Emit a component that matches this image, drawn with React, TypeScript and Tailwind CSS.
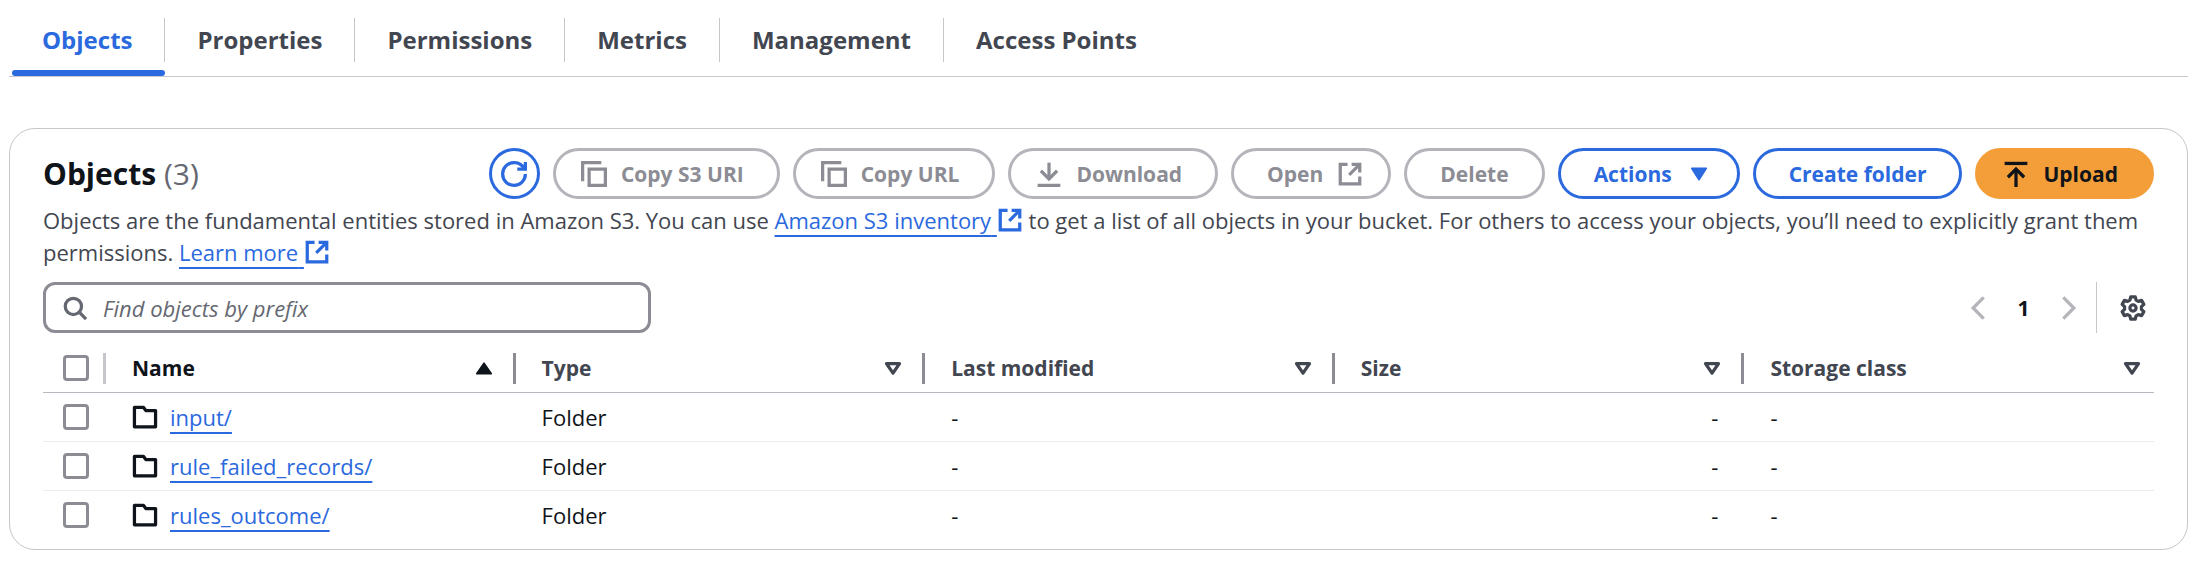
import type { ReactNode } from "react";

type IconProps = { children: ReactNode; className?: string };

function Icon({ children, className = "" }: IconProps) {
  return (
    <svg
      viewBox="0 0 16 16"
      className={`h-[26px] w-[26px] shrink-0 fill-none stroke-current stroke-2 ${className}`}
      aria-hidden="true"
    >
      {children}
    </svg>
  );
}

const RefreshIcon = () => (
  <Icon>
    <path d="M10 5h5V0.6" />
    <path d="M15 8a7 7 0 1 1-7-7 7.1 7.1 0 0 1 6.5 4" />
  </Icon>
);

const CopyIcon = () => (
  <Icon>
    <path d="M15 5H5v10h10V5z" />
    <path d="M12.5 1H1v11.5" />
  </Icon>
);

const DownloadIcon = () => (
  <Icon>
    <path d="M1 15h14" />
    <path d="m13 6-5 5-5-5" />
    <path d="M8 11V1" />
  </Icon>
);

const UploadIcon = () => (
  <Icon>
    <path d="M1 1.5h14" />
    <path d="m3 10 5-5 5 5" />
    <path d="M8 5v11" />
  </Icon>
);

const ExternalIcon = ({ className = "" }: { className?: string }) => (
  <Icon className={className}>
    <path d="M9 2h5v5" />
    <path d="m7.5 8.5 6-6" />
    <path d="M14 9.5V14H2V2h4.5" />
  </Icon>
);

const SearchIcon = () => (
  <Icon className="text-[#656871]">
    <circle cx="7" cy="7" r="5" />
    <path d="m10.6 10.6 4.2 4.2" />
  </Icon>
);

const FolderIcon = () => (
  <Icon className="text-[#0f141a]">
    <path strokeLinejoin="round" d="M1.5 14V2H7l1.5 2h6v10z" />
  </Icon>
);

const SettingsIcon = () => (
  <Icon>
    <path
      strokeLinejoin="round"
      strokeWidth="2"
      d="M6.1 3.1 6.6 1.1h2.8l.5 2 1.39.8 1.99-.56 1.4 2.42-1.49 1.43v1.62l1.49 1.43-1.4 2.42-1.99-.56-1.39.8-.5 2H6.6l-.5-2-1.39-.8-1.99.56-1.4-2.42 1.49-1.43V7.19L1.32 5.76l1.4-2.42 1.99.56z"
    />
    <circle cx="8" cy="8" r="1.9" strokeWidth="2" />
  </Icon>
);

const TriangleDown = () => (
  <Icon>
    <path className="fill-current" strokeLinejoin="round" strokeWidth="1" d="M3.5 4.5h9l-4.5 7z" />
  </Icon>
);

const SortIcon = ({ active }: { active?: boolean }) => (
  <Icon>
    {active ? (
      <path className="fill-current" strokeLinejoin="round" strokeWidth="1" d="M3.5 11.5h9L8 5z" />
    ) : (
      <path strokeLinejoin="round" strokeWidth="2" d="M4 5.3h8l-4 5.9z" />
    )}
  </Icon>
);

const tabs = ["Objects", "Properties", "Permissions", "Metrics", "Management", "Access Points"];

const buttonStyles = {
  normal: "border-[#2b69de] bg-white text-[#2b69de]",
  disabled: "border-[#b4b4bb] bg-white text-[#8c8c94]",
  primary: "border-[#f39e38] bg-[#f39e38] text-[#0f141a]",
};

type ButtonProps = {
  variant?: keyof typeof buttonStyles;
  start?: ReactNode;
  end?: ReactNode;
  children: ReactNode;
};

function Button({ variant = "normal", start, end, children }: ButtonProps) {
  return (
    <button
      type="button"
      disabled={variant === "disabled"}
      className={`flex h-[51px] items-center gap-[14px] rounded-full border-3 text-[21px] font-bold whitespace-nowrap ${
        start ? "pl-[25px]" : "pl-[33px]"
      } ${end ? "pr-[25px]" : "pr-[33px]"} ${buttonStyles[variant]}`}
    >
      {start}
      {children}
      {end}
    </button>
  );
}

function ExternalLink({ children }: { children: ReactNode }) {
  return (
    <a href="#" className="text-[#2b69de] underline decoration-2 underline-offset-[6px] [text-decoration-skip-ink:none]">
      {children}{" "}
      <ExternalIcon className="inline-block align-[-4px]" />
    </a>
  );
}

const columns = [
  { label: "Name", active: true },
  { label: "Type" },
  { label: "Last modified" },
  { label: "Size" },
  { label: "Storage class" },
];

const rows = ["input/", "rule_failed_records/", "rules_outcome/"];

function Checkbox({ label }: { label: string }) {
  return (
    <input
      type="checkbox"
      aria-label={label}
      className="ml-5 block h-[26px] w-[26px] shrink-0 appearance-none rounded-[4px] border-3 border-[#8c8c94] bg-white"
    />
  );
}

export default function App() {
  return (
    <main className="bg-white pr-6 pl-[9px] font-['Open_Sans',sans-serif] text-[22px] leading-8 text-[#424650]">
      <nav className="flex border-b border-[#c6c6cd] pl-[3px]">
        {tabs.map((tab, i) => (
          <a
            key={tab}
            href="#"
            aria-current={i === 0 ? "page" : undefined}
            className={`flex flex-col pt-[18px] text-2xl font-bold ${i === 0 ? "text-[#2b69de]" : ""}`}
          >
            <span
              className={`flex h-11 items-center pr-8 ${i === 0 ? "pl-[30px]" : "pl-8"} ${
                i < tabs.length - 1 ? "border-r border-[#c6c6cd]" : ""
              }`}
            >
              {tab}
            </span>
            <span className={`mt-2 h-[6px] rounded-full ${i === 0 ? "bg-[#2b69de]" : ""}`} />
          </a>
        ))}
      </nav>

      <section className="mt-[51px] rounded-[26px] border border-[#c6c6cd] px-[33px] pt-[19px] pb-[10px]">
        <div className="flex items-center justify-between">
          <h2 className="text-[30px] font-bold text-[#0f141a]">
            Objects <span className="font-normal text-[#656871]">(3)</span>
          </h2>
          <div className="flex gap-[13px]">
            <button
              type="button"
              aria-label="Refresh"
              className="flex h-[51px] w-[51px] items-center justify-center rounded-full border-3 border-[#2b69de] text-[#2b69de]"
            >
              <RefreshIcon />
            </button>
            <Button variant="disabled" start={<CopyIcon />}>Copy S3 URI</Button>
            <Button variant="disabled" start={<CopyIcon />}>Copy URL</Button>
            <Button variant="disabled" start={<DownloadIcon />}>Download</Button>
            <Button variant="disabled" end={<ExternalIcon />}>Open</Button>
            <Button variant="disabled">Delete</Button>
            <Button end={<TriangleDown />}>Actions</Button>
            <Button>Create folder</Button>
            <Button variant="primary" start={<UploadIcon />}>Upload</Button>
          </div>
        </div>

        <p className="mt-[5px]">
          Objects are the fundamental entities stored in Amazon S3. You can use{" "}
          <ExternalLink>Amazon S3 inventory</ExternalLink> to get a list of all objects in your
          bucket. For others to access your objects, you’ll need to explicitly grant them
          permissions. <ExternalLink>Learn more</ExternalLink>
        </p>

        <div className="mt-[14px] flex items-center justify-between">
          <label className="flex h-[51px] w-[608px] items-center gap-[15px] rounded-[12px] border-3 border-[#8c8c94] px-4">
            <SearchIcon />
            <input
              type="text"
              aria-label="Find objects by prefix"
              placeholder="Find objects by prefix"
              className="min-w-0 flex-1 outline-none placeholder:text-[#656871] placeholder:italic"
            />
          </label>
          <div className="flex items-center pr-2">
            <button type="button" disabled aria-label="Previous page" className="text-[#b4b4bb]">
              <Icon><path d="M11.5 1.5 5 8l6.5 6.5" /></Icon>
            </button>
            <button type="button" aria-current="page" className="w-[65px] text-[21px] font-bold text-[#0f141a]">
              1
            </button>
            <button type="button" disabled aria-label="Next page" className="text-[#b4b4bb]">
              <Icon><path d="M4.5 1.5 11 8l-6.5 6.5" /></Icon>
            </button>
            <span className="ml-[14px] h-[51px] w-px bg-[#c6c6cd]" />
            <button type="button" aria-label="Preferences" className="ml-[23px]">
              <SettingsIcon />
            </button>
          </div>
        </div>

        <table className="mt-3 w-full table-fixed border-collapse">
          <thead>
            <tr className="h-[47px] border-b border-[#b9b9c2]">
              <th className="w-[63px] p-0">
                <div className="flex items-center justify-between">
                  <Checkbox label="Select all objects" />
                  <span className="h-[31px] w-[3px] bg-[#c6c6cd]" />
                </div>
              </th>
              {columns.map(({ label, active }, i) => (
                <th
                  key={label}
                  aria-sort={active ? "ascending" : undefined}
                  className={`p-0 text-left text-[21px] font-bold ${active ? "text-[#0f141a]" : ""}`}
                >
                  <div className={`flex items-center pl-[26px] ${i === columns.length - 1 ? "pr-[9px]" : ""}`}>
                    <span className="flex-1">{label}</span>
                    <SortIcon active={active} />
                    {i < columns.length - 1 && <span className="ml-4 h-[31px] w-[3px] bg-[#8c8c94]" />}
                  </div>
                </th>
              ))}
            </tr>
          </thead>
          <tbody className="text-[#0f141a]">
            {rows.map((name) => (
              <tr key={name} className="h-[49px] border-b border-[#ebebf0] last:border-b-0">
                <td className="p-0">
                  <Checkbox label={`Select ${name}`} />
                </td>
                <td className="p-0 pl-[26px]">
                  <div className="flex items-center gap-3">
                    <FolderIcon />
                    <a href="#" className="text-[#2b69de] underline decoration-2 underline-offset-[6px] [text-decoration-skip-ink:none]">
                      {name}
                    </a>
                  </div>
                </td>
                <td className="p-0 pl-[26px]">Folder</td>
                <td className="p-0 pl-[26px]">-</td>
                <td className="p-0 pr-[26px] text-right">-</td>
                <td className="p-0 pl-[26px]">-</td>
              </tr>
            ))}
          </tbody>
        </table>
      </section>
    </main>
  );
}
